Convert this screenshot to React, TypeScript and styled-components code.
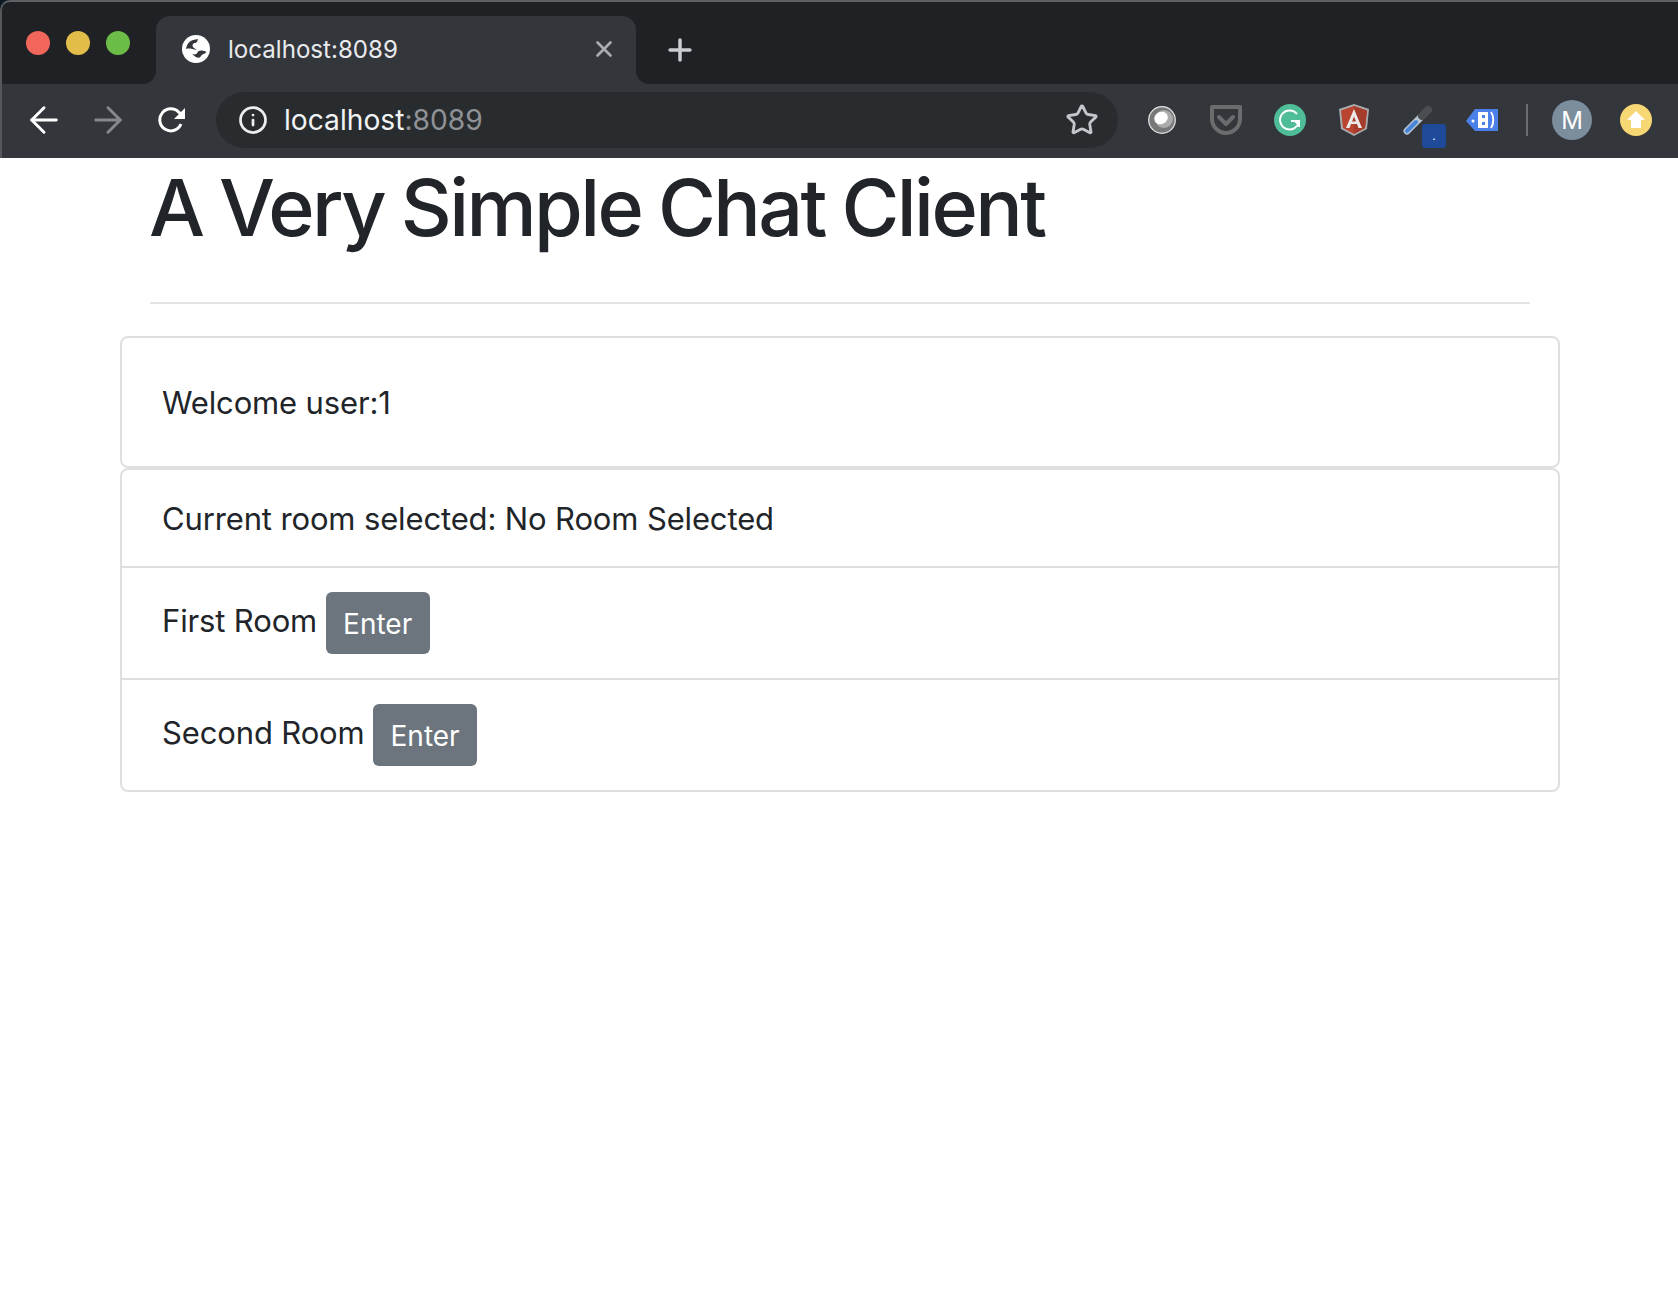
import { FunctionComponent } from 'react';
import { ArrowLeft, ArrowRight, Info, Plus, Star, X } from 'lucide-react';
import styled, { createGlobalStyle } from 'styled-components';

const stripColor = '#202124';
const toolbarColor = '#33363a';

const GlobalStyle = createGlobalStyle`
  html, body {
    margin: 0;
    padding: 0;
    background: #fff;
    font-family: Inter, "Noto Sans", sans-serif;
    color: #212529;
  }
`;

const BrowserFrame = styled.header`
  background: #0d1a26;
`;

const TabStrip = styled.div`
  height: 82px;
  display: flex;
  background: ${stripColor};
  border-top: 2px solid #5e6164;
  border-left: 2px solid #55585b;
  border-top-left-radius: 10px;
  box-sizing: content-box;
`;

const WindowControls = styled.div`
  width: 154px;
  padding: 29px 0 0 24px;
  box-sizing: border-box;
  display: flex;
  gap: 16px;
`;

const Dot = styled.span<{ color: string }>`
  width: 24px;
  height: 24px;
  border-radius: 50%;
  background: ${({ color }) => color};
`;

const Tab = styled.div`
  position: relative;
  width: 480px;
  margin-top: 14px;
  padding: 0 19px 2px 26px;
  box-sizing: border-box;
  display: flex;
  align-items: center;
  background: ${toolbarColor};
  border-radius: 14px 14px 0 0;

  &:before, &:after {
    content: "";
    position: absolute;
    bottom: 0;
    width: 14px;
    height: 14px;
    background: radial-gradient(circle at var(--cx) 0, ${stripColor} 14px, ${toolbarColor} 14.5px);
  }
  &:before {
    --cx: 0;
    left: -14px;
  }
  &:after {
    --cx: 100%;
    right: -14px;
  }
`;

const TabTitle = styled.span`
  flex: 1;
  margin-left: 18px;
  font-size: 24.1px;
  color: #e8eaed;
`;

const NewTab = styled.div`
  margin: 31px 0 0 27px;
  height: 34px;
  color: #c9ccd0;
`;

const Toolbar = styled.div`
  height: 74px;
  padding: 0 10px 2px 10px;
  border-left: 2px solid #55585b;
  box-sizing: border-box;
  display: flex;
  align-items: center;
  background: ${toolbarColor};
`;

const Slot = styled.div`
  position: relative;
  flex: none;
  width: 64px;
  height: 40px;
  display: flex;
  align-items: center;
  justify-content: center;
`;

const AddressBar = styled.div`
  flex: 1;
  height: 56px;
  margin: 0 12px;
  padding: 0 19px 0 22px;
  display: flex;
  align-items: center;
  border-radius: 28px;
  background: #292c2f;
`;

const Url = styled.span`
  flex: 1;
  margin-left: 16px;
  font-size: 28.2px;
  color: #f1f3f4;

  span {
    color: #8f9296;
  }
`;

const Separator = styled.div`
  flex: none;
  width: 2px;
  height: 32px;
  margin: 0 12px;
  background: #6a6d70;
`;

const Avatar = styled.div`
  width: 40px;
  height: 40px;
  border-radius: 50%;
  background: #7c8d9c;
  color: #fff;
  font-size: 24px;
  display: flex;
  align-items: center;
  justify-content: center;
`;

const ExtensionBadge = styled.div`
  position: absolute;
  left: 36px;
  top: 24px;
  width: 24px;
  height: 24px;
  border-radius: 3px;
  background: #1f4a9a;
  color: #fff;
  font-size: 12px;
  line-height: 24px;
  text-align: center;
`;

const Page = styled.main`
  padding: 0 118px 0 120px;
`;

const Heading = styled.h1`
  margin: 0;
  padding: 0 30px 0 29px;
  font-size: 79px;
  font-weight: 550;
  line-height: 98px;
  letter-spacing: -2.6px;
  word-spacing: -1.8px;
`;

const Rule = styled.hr`
  margin: 46px 30px 32px;
  height: 2px;
  border: 0;
  background: #e4e4e4;
`;

const Card = styled.section`
  border: 2px solid #dfdfdf;
  border-radius: 8px;
`;

const WelcomeBody = styled.div`
  height: 128px;
  padding: 0 40px;
  display: flex;
  align-items: center;
  font-size: 31px;
  letter-spacing: -0.15px;
`;

const Row = styled.div<{ tall?: boolean }>`
  height: ${({ tall }) => (tall ? 110 : 96)}px;
  padding: 0 40px;
  box-sizing: content-box;
  display: flex;
  align-items: center;
  gap: 8.5px;
  font-size: 31px;
  letter-spacing: -0.14px;

  & + & {
    border-top: 2px solid #dfdfdf;
  }
`;

const RoomName = styled.span`
  margin-bottom: 5px;
`;

const EnterButton = styled.button`
  width: 104px;
  height: 62px;
  padding: 2px 0 0;
  border: 0;
  border-radius: 6px;
  background: #6c757d;
  color: #fff;
  font-family: inherit;
  font-size: 28px;
`;

const BackIcon = styled(ArrowLeft)`
  color: #fff;
`;

const ForwardIcon = styled(ArrowRight)`
  color: #86898c;
`;

const Globe = () => (
  <svg width="28" height="28" viewBox="0 0 28 28">
    <circle cx="14" cy="14" r="14" fill="#fff" />
    <path d="M4 14C5 8 8 6 11 5L16 4C15 8 14 8 12 8C10 10 10 11 12 13L15 15C10 14 7 13 4 14z" fill={toolbarColor} />
    <path d="M10 19C13 20 15 19 16 16.500C18 15 21 15 24.500 17C23 19 20 19 19 21C17.500 24 14 23 10 19z" fill={toolbarColor} />
  </svg>
);

const Reload = () => (
  <svg width="28" height="28" viewBox="0 0 28 28" fill="none">
    <path d="M23 18A11 11 0 1 1 21 6.5L25 10" stroke="#fff" strokeWidth="3" />
    <path d="M27 2V13H16z" fill="#fff" />
  </svg>
);

const Reflect = () => (
  <svg width="28" height="28" viewBox="0 0 28 28">
    <circle cx="14" cy="14" r="13.3" fill="#77787a" stroke="#e8e8e8" strokeWidth="1.2" />
    <circle cx="16" cy="13" r="9" fill="#ababab" />
    <ellipse cx="13" cy="12" rx="7" ry="6" fill="#fff" transform="rotate(-30 13 12)" />
  </svg>
);

const Pocket = () => (
  <svg width="32" height="30" viewBox="0 0 32 30" fill="none" stroke="#6b6c6d">
    <path d="M2 2H30V14C30 22 23 28 16 28C9 28 2 22 2 14z" strokeWidth="4" strokeLinejoin="round" />
    <path d="M9 12L16 19L23 12" strokeWidth="4" strokeLinecap="round" strokeLinejoin="round" />
  </svg>
);

const Grammarly = () => (
  <svg width="32" height="32" viewBox="0 0 32 32" fill="none">
    <circle cx="16" cy="16" r="16" fill="#4fbd97" />
    <path d="M23 10A9.5 9.5 0 1 0 25 17H17" stroke="#fff" strokeWidth="2" />
    <path d="M25 17L25 23M21 17L25 21" stroke="#fff" strokeWidth="2" />
  </svg>
);

const Angular = () => (
  <svg width="32" height="32" viewBox="0 0 32 32">
    <path d="M16 0L31 5L29 25L16 32L3 25L1 5z" fill="#a9abad" />
    <path d="M16 2L29 6.5L27 24L16 30L5 24L3 6.5z" fill="#b9442f" />
    <path d="M16 2L29 6.5L27 24L16 30z" fill="#a63c2b" />
    <path d="M16 5L24 24H20.5L19 20H13L11.500 24H8zM14 17.500H18L16 12.500z" fill="#eceae8" fillRule="evenodd" />
  </svg>
);

const Dropper = () => (
  <svg width="32" height="32" viewBox="0 0 32 32" fill="none" strokeLinecap="round">
    <path d="M5 27L18 14" stroke="#b8c4d2" strokeWidth="7" />
    <path d="M5 27L14 18" stroke="#4a86d8" strokeWidth="4" />
    <path d="M20 12L26 6" stroke="#4b4d50" strokeWidth="8" />
  </svg>
);

const TagIcon = () => (
  <svg width="34" height="24" viewBox="0 0 34 24">
    <path d="M10 1H33V23H10L1 13z" fill="#4a80e8" />
    <circle cx="8" cy="13" r="1.500" fill="#fff" />
    <rect x="13" y="4" width="10" height="16" fill="#fff" />
    <rect x="17" y="7" width="3" height="3" fill="#4a80e8" />
    <rect x="17" y="14" width="3" height="3" fill="#4a80e8" />
    <path d="M26 4C29 8 29 16 26 20" stroke="#fff" strokeWidth="2" fill="none" />
  </svg>
);

const Upload = () => (
  <svg width="32" height="32" viewBox="0 0 32 32">
    <circle cx="16" cy="16" r="16" fill="#f7d674" />
    <path d="M16 7L25 16H21V24H11V16H7z" fill="#fff" />
  </svg>
);

const Room: FunctionComponent<{ name: string }> = ({ name }) => (
  <Row tall>
    <RoomName>{name}</RoomName>
    <EnterButton>Enter</EnterButton>
  </Row>
);

const App = () => (
  <>
    <GlobalStyle />
    <BrowserFrame>
      <TabStrip>
        <WindowControls>
          <Dot color="#f2665c" />
          <Dot color="#e2bd4a" />
          <Dot color="#6cbd48" />
        </WindowControls>
        <Tab>
          <Globe />
          <TabTitle>localhost:8089</TabTitle>
          <X size={26} color="#a9acb0" strokeWidth={2.5} />
        </Tab>
        <NewTab>
          <Plus size={34} strokeWidth={2.5} />
        </NewTab>
      </TabStrip>
      <Toolbar>
        <Slot><BackIcon size={42} strokeWidth={1.7} /></Slot>
        <Slot><ForwardIcon size={42} strokeWidth={1.7} /></Slot>
        <Slot><Reload /></Slot>
        <AddressBar>
          <Info size={30} color="#eceef0" strokeWidth={2.2} />
          <Url>localhost<span>:8089</span></Url>
          <Star size={34} color="#c4c8cc" strokeWidth={2} />
        </AddressBar>
        <Slot><Reflect /></Slot>
        <Slot><Pocket /></Slot>
        <Slot><Grammarly /></Slot>
        <Slot><Angular /></Slot>
        <Slot>
          <Dropper />
          <ExtensionBadge>.</ExtensionBadge>
        </Slot>
        <Slot><TagIcon /></Slot>
        <Separator />
        <Slot><Avatar>M</Avatar></Slot>
        <Slot><Upload /></Slot>
      </Toolbar>
    </BrowserFrame>
    <Page>
      <Heading>A Very Simple Chat Client</Heading>
      <Rule />
      <Card>
        <WelcomeBody>Welcome user:1</WelcomeBody>
      </Card>
      <Card>
        <Row>Current room selected: No Room Selected</Row>
        <Room name="First Room" />
        <Room name="Second Room" />
      </Card>
    </Page>
  </>
);

export default App;
